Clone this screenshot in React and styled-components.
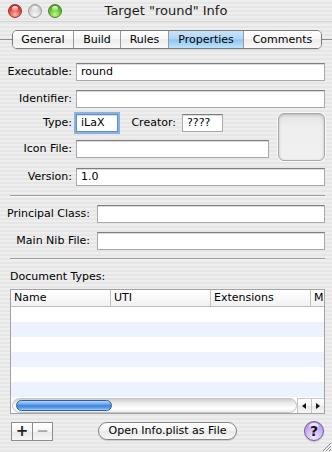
import React from "react";
import styled, { createGlobalStyle } from "styled-components";

const Global = createGlobalStyle`
  html, body { margin: 0; padding: 0; }
  body {
    font-family: "DejaVu Sans", "Lucida Grande", sans-serif;
    font-size: 11px;
    color: #000;
  }
  * { box-sizing: border-box; }
`;

const pinstripe = `repeating-linear-gradient(to bottom, #eeeeee 0px, #eeeeee 2px, #e6e6e6 2px, #e6e6e6 4px)`;

const Window = styled.div`
  position: relative;
  width: 332px;
  height: 452px;
  overflow: hidden;
  background: ${pinstripe};
  display: flex;
  flex-direction: column;
`;

const TitleBar = styled.div`
  height: 22px;
  flex: none;
  display: grid;
  grid-template-columns: 1fr auto 1fr;
  align-items: center;
  border-bottom: 1px solid #d4d4d4;
`;

const Lights = styled.div`
  display: flex;
  gap: 6px;
  padding-left: 8px;
`;

const Light = styled.span`
  position: relative;
  width: 14px;
  height: 14px;
  border-radius: 50%;
  border: 1px solid ${(p) => p.$edge};
  background: radial-gradient(circle at 50% 80%, ${(p) => p.$glow} 0%, ${(p) => p.$base} 55%, ${(p) => p.$dark} 100%);
  &::after {
    content: "";
    position: absolute;
    left: 3px;
    right: 3px;
    top: 1px;
    height: 5px;
    border-radius: 50%;
    background: linear-gradient(rgba(255, 255, 255, 0.95), rgba(255, 255, 255, 0.15));
  }
`;

const Title = styled.div`
  font-size: 13px;
  color: #1b1b1b;
  white-space: nowrap;
`;

const TabRow = styled.div`
  display: flex;
  align-items: center;
  height: 19px;
  margin-top: 8px;
  flex: none;
`;

const TabLine = styled.div`
  height: 1px;
  background: #8e8e8e;
  flex: ${(p) => (p.$grow ? "1" : `0 0 ${p.$w}px`)};
`;

const Segmented = styled.div`
  display: flex;
  height: 19px;
  border: 1px solid #7a7a7a;
  border-radius: 5px;
  overflow: hidden;
  box-shadow: 0 1px 1px rgba(0, 0, 0, 0.1);
`;

const Tab = styled.div`
  width: ${(p) => p.$w}px;
  display: flex;
  align-items: center;
  justify-content: center;
  border-left: ${(p) => (p.$first ? "none" : "1px solid #999")};
  background: ${(p) =>
    p.$active
      ? "linear-gradient(#c9e3fa, #b0d6f7 45%, #8fc5f3 52%, #bfe5fc 100%)"
      : "linear-gradient(#ffffff, #f8f8f8 45%, #ececec 52%, #f9f9f9 100%)"};
  font-size: 11px;
  white-space: nowrap;
`;

const FormGrid = styled.div`
  display: grid;
  grid-template-columns: ${(p) => p.$label}px 1fr 56px;
  grid-template-rows: ${(p) => p.$rows};
  align-items: start;
  margin: ${(p) => p.$mt}px 7px 0 0;
  flex: none;
`;

const Label = styled.div`
  grid-column: 1;
  text-align: right;
  padding-right: ${(p) => p.$pr}px;
  line-height: 18px;
  white-space: nowrap;
`;

const Field = styled.div`
  height: 18px;
  background: #fff;
  border: 1px solid #a9a9a9;
  border-top-color: #7e7e7e;
  box-shadow: inset 0 1px 0 #dcdcdc;
  padding: 0 4px;
  line-height: 16px;
  font-size: 11px;
  white-space: nowrap;
  overflow: hidden;
  grid-column: ${(p) => p.$span || "auto"};
  width: ${(p) => (p.$w ? `${p.$w}px` : "auto")};
  ${(p) =>
    p.$focus &&
    `
    border-color: #5f8fcf;
    box-shadow: 0 0 0 2px rgba(120, 166, 226, 0.85), inset 0 1px 0 #dcdcdc;
  `}
`;

const InlineGroup = styled.div`
  grid-column: 2;
  display: flex;
  align-items: center;
`;

const InlineLabel = styled.div`
  width: ${(p) => p.$w}px;
  text-align: right;
  padding-right: 6px;
  line-height: 18px;
  white-space: nowrap;
`;

const IconWell = styled.div`
  grid-column: 3;
  grid-row: 3 / span 2;
  justify-self: end;
  width: 47px;
  height: 48px;
  margin-top: -1px;
  border-radius: 6px;
  border: 1px solid #a7a7a7;
  background: linear-gradient(#e4e4e4, #efefef 30%, #f0f0f0);
  box-shadow: 0 0 0 1px #fafafa, inset 0 1px 3px rgba(0, 0, 0, 0.22);
`;

const Separator = styled.div`
  height: 1px;
  flex: none;
  background: #9c9c9c;
  margin: ${(p) => p.$mt}px 7px 0 10px;
  box-shadow: 0 1px 0 rgba(255, 255, 255, 0.5);
`;

const SectionLabel = styled.div`
  margin-top: 11px;
  padding-left: 10px;
  line-height: 13px;
  flex: none;
`;

const Table = styled.div`
  margin: 6px 7px 0 10px;
  height: 125px;
  flex: none;
  display: flex;
  flex-direction: column;
  border: 1px solid #a2a2a2;
  background: #fff;
`;

const Header = styled.div`
  display: flex;
  height: 17px;
  flex: none;
  border-bottom: 1px solid #bdbdbd;
  background: linear-gradient(#ffffff, #f9f9f9 50%, #f1f1f1);
  overflow: hidden;
`;

const HeaderCell = styled.div`
  flex: ${(p) => (p.$w ? `0 0 ${p.$w}px` : "1")};
  border-right: ${(p) => (p.$w ? "1px solid #c2c2c2" : "none")};
  padding-left: 3px;
  line-height: 16px;
  white-space: nowrap;
  overflow: hidden;
`;

const Body = styled.div`
  flex: 1;
  overflow: hidden;
  display: flex;
  flex-direction: column;
`;

const Row = styled.div`
  height: 15px;
  flex: none;
  background: ${(p) => (p.$alt ? "#edf3fe" : "#ffffff")};
`;

const ScrollBar = styled.div`
  height: 15px;
  flex: none;
  display: flex;
  background: #fff;
  padding-left: 1px;
`;

const Track = styled.div`
  flex: 1;
  height: 15px;
  border-radius: 8px;
  border: 1px solid #c4c4c4;
  background: linear-gradient(#cfcfcf, #e6e6e6 25%, #f8f8f8 55%, #ffffff 75%, #ececec);
  display: flex;
  align-items: center;
  padding-left: 3px;
`;

const Thumb = styled.div`
  width: 96px;
  height: 11px;
  border-radius: 6px;
  border: 1px solid #2b5fa8;
  background: linear-gradient(#b6d6f6 0%, #6fa8ea 35%, #3f82dc 55%, #5da2ee 80%, #a3d2fc 100%);
`;

const Arrows = styled.div`
  width: 27px;
  display: flex;
  border-top: 1px solid #c8c8c8;
`;

const ArrowBtn = styled.div`
  flex: 1;
  display: flex;
  align-items: center;
  justify-content: center;
  border-left: 1px solid #c6c6c6;
  background: linear-gradient(#ffffff, #f4f4f4 50%, #e7e7e7 51%, #f7f7f7);
`;

const Tri = styled.span`
  width: 0;
  height: 0;
  border-top: 3px solid transparent;
  border-bottom: 3px solid transparent;
  ${(p) => (p.$dir === "left" ? "border-right: 4px solid #111;" : "border-left: 4px solid #111;")}
`;

const BottomBar = styled.div`
  margin-top: 7px;
  height: 20px;
  flex: none;
  display: grid;
  grid-template-columns: 1fr auto 1fr;
  align-items: center;
  padding: 0 8px 0 11px;
`;

const PlusMinus = styled.div`
  justify-self: start;
  display: flex;
  height: 19px;
  border: 1px solid #8c8c8c;
  background: linear-gradient(#ffffff, #f5f5f5 50%, #e9e9e9 51%, #f6f6f6);
`;

const PMButton = styled.div`
  width: 20px;
  display: flex;
  align-items: center;
  justify-content: center;
  border-left: ${(p) => (p.$first ? "none" : "1px solid #8c8c8c")};
  color: ${(p) => (p.$disabled ? "#a8a8a8" : "#222")};
  font-size: 15px;
  font-weight: bold;
  line-height: 1;
`;

const PushButton = styled.div`
  height: 18px;
  padding: 0 9px;
  border-radius: 9px;
  border: 1px solid #858585;
  background: linear-gradient(#ffffff, #f6f6f6 45%, #e8e8e8 52%, #f9f9f9);
  box-shadow: 0 1px 1px rgba(0, 0, 0, 0.15);
  line-height: 16px;
  font-size: 11px;
  white-space: nowrap;
`;

const HelpButton = styled.div`
  justify-self: end;
  width: 20px;
  height: 20px;
  border-radius: 50%;
  border: 1px solid #6e5e94;
  background: radial-gradient(circle at 50% 85%, #f0e6ff 0%, #c8aef5 55%, #a583e6 100%);
  box-shadow: 0 1px 1px rgba(0, 0, 0, 0.2);
  display: flex;
  align-items: center;
  justify-content: center;
  font-weight: bold;
  font-size: 14px;
  color: #151515;
  position: relative;
  &::after {
    content: "";
    position: absolute;
    left: 4px;
    right: 4px;
    top: 1px;
    height: 7px;
    border-radius: 50%;
    background: linear-gradient(rgba(255, 255, 255, 0.9), rgba(255, 255, 255, 0.1));
  }
`;

const HelpMark = styled.span`
  position: relative;
  z-index: 1;
`;

const Grip = styled.svg`
  position: absolute;
  right: 0;
  bottom: 0;
`;

const tabs = [
  { name: "General", w: 60 },
  { name: "Build", w: 47 },
  { name: "Rules", w: 48 },
  { name: "Properties", w: 75, active: true },
  { name: "Comments", w: 78 },
];

export default function App() {
  return (
    <>
      <Global />
      <Window>
        <TitleBar>
          <Lights>
            <Light $base="#e2463f" $dark="#a81b17" $glow="#ffb3a6" $edge="#8f3530" />
            <Light $base="#d2d2d2" $dark="#b4b4b4" $glow="#f7f7f7" $edge="#9a9a9a" />
            <Light $base="#5fc12a" $dark="#3c8c15" $glow="#c6f78a" $edge="#4c7d31" />
          </Lights>
          <Title>Target "round" Info</Title>
          <div />
        </TitleBar>

        <TabRow>
          <TabLine $w={12} />
          <Segmented>
            {tabs.map((t, i) => (
              <Tab key={t.name} $w={t.w} $first={i === 0} $active={t.active}>
                {t.name}
              </Tab>
            ))}
          </Segmented>
          <TabLine $grow />
        </TabRow>

        <FormGrid $label={76} $rows="27px 24px 26px 28px 18px" $mt={14}>
          <Label $pr={4}>Executable:</Label>
          <Field $span="2 / 4">round</Field>

          <Label $pr={4}>Identifier:</Label>
          <Field $span="2 / 4" />

          <Label $pr={4}>Type:</Label>
          <InlineGroup>
            <Field $w={42} $focus>iLaX</Field>
            <InlineLabel $w={64}>Creator:</InlineLabel>
            <Field $w={41}>????</Field>
          </InlineGroup>
          <IconWell />

          <Label $pr={4}>Icon File:</Label>
          <Field $span="2" />

          <Label $pr={4}>Version:</Label>
          <Field $span="2 / 4">1.0</Field>
        </FormGrid>

        <Separator $mt={9} />

        <FormGrid $label={97} $rows="27px 18px" $mt={9}>
          <Label $pr={7}>Principal Class:</Label>
          <Field $span="2 / 4" />
          <Label $pr={7}>Main Nib File:</Label>
          <Field $span="2 / 4" />
        </FormGrid>

        <Separator $mt={8} />

        <SectionLabel>Document Types:</SectionLabel>

        <Table>
          <Header>
            <HeaderCell $w={100}>Name</HeaderCell>
            <HeaderCell $w={100}>UTI</HeaderCell>
            <HeaderCell $w={100}>Extensions</HeaderCell>
            <HeaderCell>MIME Types</HeaderCell>
          </Header>
          <Body>
            {[0, 1, 2, 3, 4, 5, 6].map((i) => (
              <Row key={i} $alt={i % 2 === 1} />
            ))}
          </Body>
          <ScrollBar>
            <Track>
              <Thumb />
            </Track>
            <Arrows>
              <ArrowBtn>
                <Tri $dir="left" />
              </ArrowBtn>
              <ArrowBtn>
                <Tri $dir="right" />
              </ArrowBtn>
            </Arrows>
          </ScrollBar>
        </Table>

        <BottomBar>
          <PlusMinus>
            <PMButton $first>+</PMButton>
            <PMButton $disabled>−</PMButton>
          </PlusMinus>
          <PushButton>Open Info.plist as File</PushButton>
          <HelpButton>
            <HelpMark>?</HelpMark>
          </HelpButton>
        </BottomBar>

        <Grip width="11" height="11" viewBox="0 0 11 11">
          <path d="M10 2 L2 10 M10 5 L5 10 M10 8 L8 10" stroke="#8a8a8a" strokeWidth="1" />
          <path d="M11 3 L3 11 M11 6 L6 11 M11 9 L9 11" stroke="#ffffff" strokeWidth="1" />
        </Grip>
      </Window>
    </>
  );
}
